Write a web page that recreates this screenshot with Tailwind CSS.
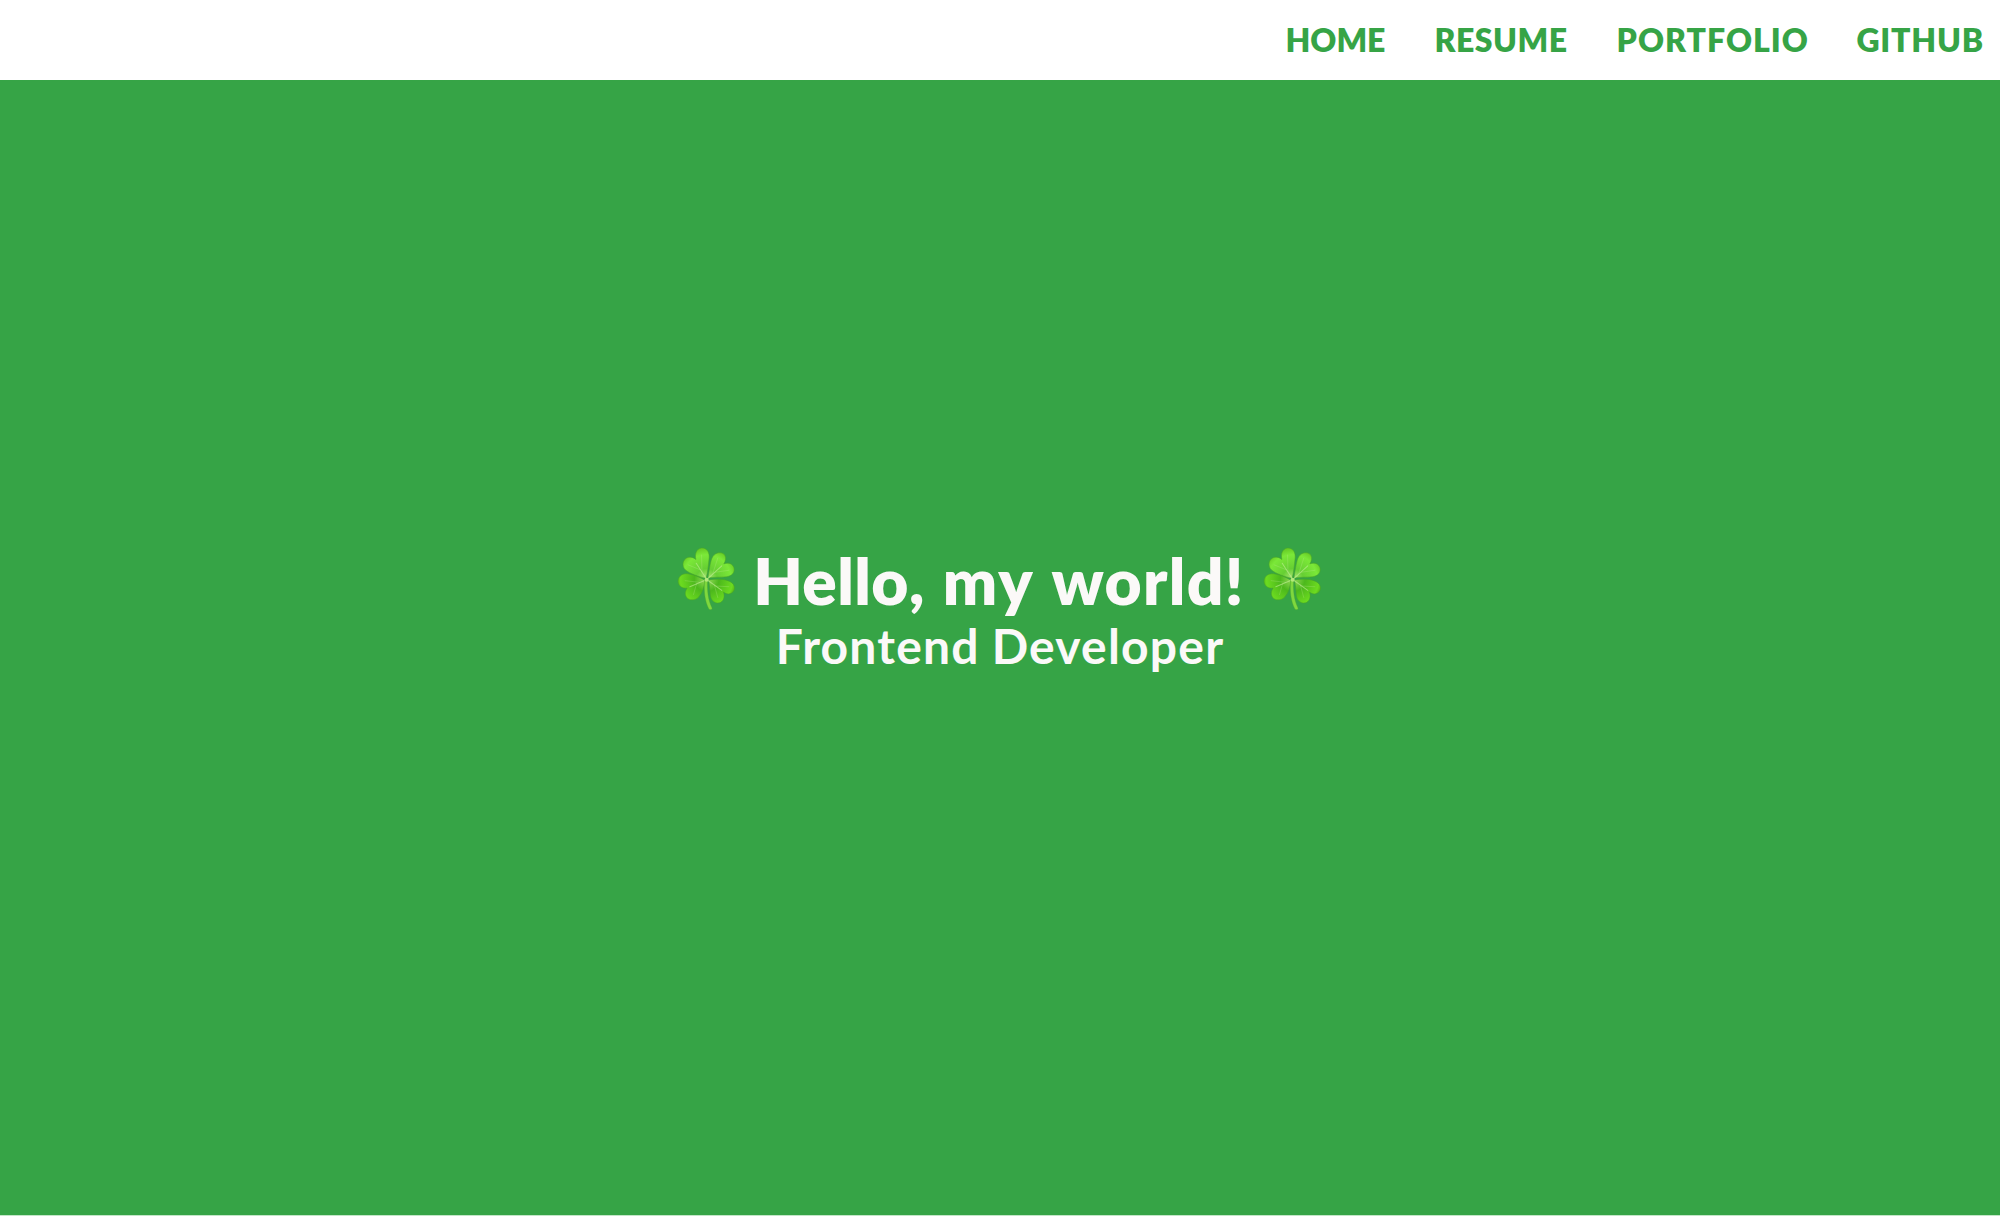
<!DOCTYPE html>
<html lang="en">
<head>
<meta charset="utf-8">
<title>Hello, my world!</title>
<script src="https://cdn.jsdelivr.net/npm/@tailwindcss/browser@4"></script>
</head>
<body class="h-screen overflow-hidden bg-white font-['Lato',sans-serif]">
<svg class="absolute size-0">
  <defs>
    <radialGradient id="top" gradientUnits="userSpaceOnUse" cx="112" cy="117" r="92"><stop offset="0" stop-color="#b4e880"/><stop offset=".35" stop-color="#66cf33"/><stop offset=".8" stop-color="#7be838"/><stop offset="1" stop-color="#66cc25"/></radialGradient>
    <radialGradient id="low" gradientUnits="userSpaceOnUse" cx="112" cy="117" r="92"><stop offset="0" stop-color="#9add60"/><stop offset=".4" stop-color="#4cb81c"/><stop offset=".85" stop-color="#6cdb20"/><stop offset="1" stop-color="#4cae15"/></radialGradient>
    <g id="clover">
      <g stroke="#4aa622" stroke-width="1.5">
        <path fill="url(#top)" d="M110 114C88 109 62 100 49 89C37 78 40 57 56 52C66 49 74 53 80 58C76 42 81 26 97 24C114 23 122 39 119 57C117 78 115 97 110 114Z"/>
        <path fill="url(#top)" d="M116 113C119 94 121 76 126 59C131 43 144 35 158 39C171 44 171 60 163 71C176 66 189 70 193 82C197 97 187 107 172 109C153 112 134 109 116 113Z"/>
        <path fill="url(#low)" d="M107 120C105 139 100 157 88 170C78 180 59 181 52 170C46 161 49 151 54 143C39 145 27 136 27 122C28 106 42 98 59 101C77 104 92 111 107 120Z"/>
        <path fill="url(#low)" d="M118 119C140 115 165 115 182 124C197 132 199 149 187 157C179 163 169 160 162 155C167 169 162 184 150 187C135 189 125 179 123 164C121 149 121 133 118 119Z"/>
      </g>
      <g fill="none" stroke="#c4f09a" stroke-linecap="round" stroke-opacity=".6">
        <path stroke-width="3" d="M112 117L81 69M113 117L157 77M111 118L62 139M114 119L157 150"/>
        <path stroke-width="1.2" d="M98 95L97 45M94 89L57 74M130 101L145 54M137 96L178 90M91 126L48 121M82 130L73 162M135 134L145 171M139 137L178 139"/>
      </g>
      <path fill="#7fd83e" stroke="#4aa42a" stroke-width="1" d="M106 119C103 149 106 182 119 206C123 209 130 206 128 202C116 178 113 149 115 119Z"/>
      <circle cx="112" cy="118" r="6" fill="#b2e87a"/>
    </g>
  </defs>
</svg>
<header class="h-20 bg-white">
  <nav class="flex h-full items-center justify-end pb-px text-[32px] font-extrabold leading-10 text-[#36a446]">
    <a class="mr-[49px]">HOME</a>
    <a class="mr-[49px] tracking-[0.5px]">RESUME</a>
    <a class="mr-[47.5px] tracking-[1px]">PORTFOLIO</a>
    <a class="mr-4 tracking-[0.8px]">GITHUB</a>
  </nav>
</header>
<main class="flex h-[1135px] flex-col items-center justify-center bg-[#36a446] pb-19 text-[#fbf9f8]">
  <h1 class="flex h-[72px] items-center pl-1 text-[64px] font-extrabold leading-[72px]">
    <svg class="mr-1 size-20" viewBox="0 0 238 238"><use href="#clover"/></svg>
    <span class="mr-[18px] pt-0.5 tracking-[0.4px]">Hello,</span>
    <span class="mr-[17px] pt-0.5 tracking-[2px]">my</span>
    <span class="mr-[10px] pt-0.5 tracking-[1.3px]">world!</span>
    <svg class="size-20" viewBox="0 0 238 238"><use href="#clover"/></svg>
  </h1>
  <h2 class="flex gap-3 text-[48px] font-bold leading-[59px]">
    <span class="tracking-[1.2px]">Frontend</span>
    <span class="tracking-[1.2px]">Developer</span>
  </h2>
</main>
<div class="h-px bg-[#c3e6c8]"></div>
</body>
</html>
